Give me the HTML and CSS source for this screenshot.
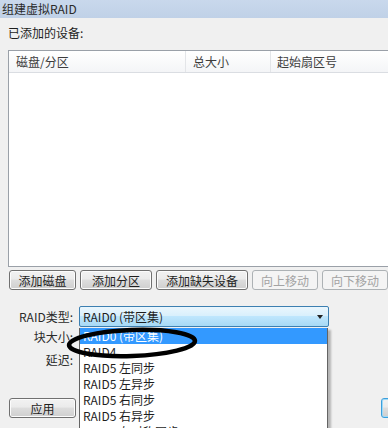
FILE: index.html
```html
<!DOCTYPE html>
<html lang="zh-CN">

<head>
    <meta charset="UTF-8">
    <meta name="viewport" content="width=device-width, initial-scale=1.0">
    <title>组建虚拟RAID</title>
    <link rel="stylesheet" href="styles.css">
</head>

<body>
    <div class="titlebar">组建虚拟RAID</div>
    <div class="content">
        <div class="caption">已添加的设备:</div>
        <div class="listbox">
            <div class="list-head">
                <div class="col col-disk">磁盘/分区</div>
                <div class="col col-size">总大小</div>
                <div class="col col-start">起始扇区号</div>
            </div>
        </div>
        <div class="btn-row">
            <button class="btn w-disk">添加磁盘</button>
            <button class="btn w-part">添加分区</button>
            <button class="btn w-miss">添加缺失设备</button>
            <button class="btn w-move" disabled>向上移动</button>
            <button class="btn w-move" disabled>向下移动</button>
        </div>
        <div class="form">
            <div class="label">RAID类型:</div>
            <div class="select">
                <span>RAID0 (带区集)</span>
                <span class="arrow"></span>
            </div>
            <div class="label row-size">块大小:</div>
            <div></div>
            <div class="label row-delay">延迟:</div>
            <div></div>
            <ul class="dropdown">
                <li class="active">RAID0 (带区集)</li>
                <li>RAID4</li>
                <li>RAID5 左同步</li>
                <li>RAID5 左异步</li>
                <li>RAID5 右同步</li>
                <li>RAID5 右异步</li>
                <li>RAID6 左对称同步</li>
            </ul>
            <svg class="circle" width="140" height="40" viewBox="0 0 140 40">
                <ellipse cx="70" cy="20" rx="63" ry="13" fill="none" stroke="#000" stroke-width="4.5"
                    transform="rotate(-2 70 20)" />
            </svg>
        </div>
        <div class="bottom-row">
            <button class="btn w-disk">应用</button>
            <button class="btn focus">确定</button>
        </div>
    </div>
</body>

</html>
```

FILE: styles.css
```css
body {
    margin: 0;
    width: 388px;
    height: 428px;
    overflow: hidden;
    background: #f0f0f0;
    font-family: 'Noto Sans CJK SC', 'DejaVu Sans', sans-serif;
    font-size: 12px;
    color: #1e1e1e;
}

.titlebar {
    height: 18px;
    line-height: 17px;
    padding-left: 2px;
    background: linear-gradient(180deg, #c9d8ec 0%, #c0d1e7 100%);
    color: #2a2a2a;
    font-size: 12px;
}

.content {
    padding-left: 8px;
    position: relative;
}

.caption {
    margin-top: 8px;
    height: 14px;
    line-height: 14px;
}

.listbox {
    margin-top: 10px;
    margin-right: -12px;
    height: 215px;
    background: #fff;
    border: 1px solid #9aa0a8;
}

.list-head {
    display: flex;
    height: 21px;
    line-height: 22px;
    border-bottom: 1px solid #dadde2;
    background: linear-gradient(180deg, #ffffff 0%, #f4f5f7 100%);
    color: #3c3c3c;
}

.col {
    padding-left: 7px;
    border-right: 1px solid #e3e5e8;
}

.col-disk {
    width: 169px;
}

.col-size {
    width: 77px;
}

.col-start {
    flex: 1;
    padding-left: 6px;
}

.btn-row {
    display: flex;
    gap: 4px;
    margin-top: 3px;
    padding-left: 1px;
}

.btn {
    height: 20px;
    padding: 0;
    font-family: inherit;
    font-size: 12px;
    color: #1e1e1e;
    border: 1px solid #707070;
    border-radius: 3px;
    background: linear-gradient(180deg, #f2f2f2 0%, #ebebeb 45%, #dddddd 50%, #cfcfcf 100%);
    box-shadow: inset 0 0 0 1px #fcfcfc;
}

.btn:disabled {
    color: #a3a3a3;
    border-color: #adb2b5;
    background: #f4f4f4;
    box-shadow: none;
}

.w-disk {
    width: 67px;
}

.w-part {
    width: 72px;
}

.w-miss {
    width: 92px;
}

.w-move {
    width: 66px;
    flex-shrink: 0;
}

.form {
    position: relative;
    display: grid;
    grid-template-columns: 65px 250px;
    column-gap: 6px;
    margin-top: 16px;
}

.label {
    text-align: right;
    line-height: 21px;
    color: #2a2a2a;
}

.row-size {
    margin-top: -1px;
}

.row-delay {
    margin-top: 2px;
}

.select {
    display: flex;
    align-items: center;
    justify-content: space-between;
    height: 19px;
    padding: 0 5px 0 3px;
    border: 1px solid #3c7fb1;
    border-radius: 2px;
    background: linear-gradient(180deg, #eaf6fd 0%, #d9f0fc 45%, #bee6fd 50%, #a7d9f5 100%);
}

.arrow {
    width: 0;
    height: 0;
    border-left: 3px solid transparent;
    border-right: 3px solid transparent;
    border-top: 4px solid #222;
}

.dropdown {
    position: absolute;
    left: 71px;
    top: 22px;
    width: 247px;
    height: 110px;
    margin: 0;
    padding: 0;
    list-style: none;
    background: #fff;
    border: 1px solid #646464;
    border-top: none;
    box-shadow: 3px 2px 2px rgba(0, 0, 0, 0.25);
    overflow: hidden;
}

.dropdown li {
    height: 16px;
    line-height: 16px;
    padding-left: 3px;
}

.dropdown .active {
    background: #3399ff;
    color: #fff;
}

.circle {
    position: absolute;
    left: 54px;
    top: 17px;
}

.bottom-row {
    display: flex;
    justify-content: space-between;
    margin-top: 28px;
    margin-right: -60px;
    padding-left: 1px;
}

.focus {
    width: 67px;
    border-color: #3c9fdc;
    box-shadow: inset 0 0 0 1px #9fdaf8;
}
```
